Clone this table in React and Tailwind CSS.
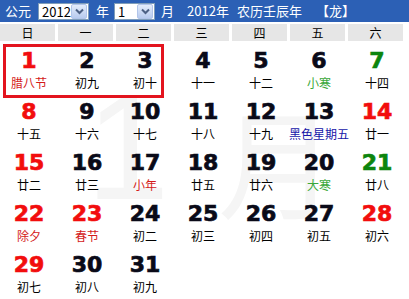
import React from 'react';

const CJK = { fontFamily: '"Noto Sans CJK SC", "Liberation Sans", sans-serif' }
const NUM = { fontFamily: '"DejaVu Sans", "Liberation Sans", sans-serif' }
const SANS = { fontFamily: '"Liberation Sans", sans-serif' }

const weekNames = ["日", "一", "二", "三", "四", "五", "六"]

// n: day, l: lunar text, nc: number colour, lc: lunar colour
const days = [
    { n: 1, l: "腊八节", nc: "red", lc: "red" },
    { n: 2, l: "初九" },
    { n: 3, l: "初十" },
    { n: 4, l: "十一" },
    { n: 5, l: "十二" },
    { n: 6, l: "小寒", lc: "green" },
    { n: 7, l: "十四", nc: "green" },
    { n: 8, l: "十五", nc: "red" },
    { n: 9, l: "十六" },
    { n: 10, l: "十七" },
    { n: 11, l: "十八" },
    { n: 12, l: "十九" },
    { n: 13, l: "黑色星期五", lc: "blue" },
    { n: 14, l: "廿一", nc: "red" },
    { n: 15, l: "廿二", nc: "red" },
    { n: 16, l: "廿三" },
    { n: 17, l: "小年", lc: "red" },
    { n: 18, l: "廿五" },
    { n: 19, l: "廿六" },
    { n: 20, l: "大寒", lc: "green" },
    { n: 21, l: "廿八", nc: "green" },
    { n: 22, l: "除夕", nc: "red", lc: "red" },
    { n: 23, l: "春节", nc: "red", lc: "red" },
    { n: 24, l: "初二" },
    { n: 25, l: "初三" },
    { n: 26, l: "初四" },
    { n: 27, l: "初五" },
    { n: 28, l: "初六", nc: "red" },
    { n: 29, l: "初七", nc: "red" },
    { n: 30, l: "初八" },
    { n: 31, l: "初九" },
]

const numColor = {
    red: "text-[#f20d0d]",
    green: "text-[#0d850d]",
}

const lunarColor = {
    red: "text-[#d41a1a]",
    green: "text-[#3aa83a]",
    blue: "text-[#1616a8]",
}

const FakeSelect = ({ value, width }) => (
    <div className={`flex items-center h-[17px] bg-white border border-[#7f9db9] ${width}`}>
        <span className="flex-1 pl-[3px] text-[13px] leading-none text-black">{value}</span>
        <span className="w-[16px] h-[15px] mr-px flex items-center justify-center rounded-[2px] bg-gradient-to-b from-[#e3ecfb] to-[#b8cbef] border border-[#b2c5ea]">
            <svg width="9" height="7" viewBox="0 0 9 7">
                <path d="M1 1.5 L4.5 5 L8 1.5" fill="none" stroke="#4d6185" strokeWidth="2" />
            </svg>
        </span>
    </div>
)

const DayCell = ({ d }) => (
    <div className="relative flex flex-col items-center h-[51px] pt-[6px]">
        <div className={`text-[22px] leading-[24px] font-bold [-webkit-text-stroke:0.7px_currentColor] ${numColor[d.nc] || "text-[#0a0a18]"}`} style={NUM}>
            {d.n}
        </div>
        <div className={`mt-[3px] text-[12px] leading-[14px] whitespace-nowrap ${lunarColor[d.lc] || "text-black"}`} style={CJK}>
            {d.l}
        </div>
    </div>
)

const App = () => {
    return (
        <div className="w-[409px] h-[299px] bg-white overflow-hidden relative" style={CJK}>
            {/* header bar */}
            <div className="h-[22px] bg-[#2c60b5] flex items-center text-white text-[13px]">
                <span className="ml-[5px] w-[33px]">公元</span>
                <FakeSelect value="2012" width="w-[51px]" />
                <span className="ml-[7px] w-[18px]">年</span>
                <FakeSelect value="1" width="w-[41px]" />
                <span className="ml-[6px]">月</span>
                <span className="ml-[13px]">2012年</span>
                <span className="ml-[8px]">农历壬辰年</span>
                <span className="ml-[14px]">【龙】</span>
            </div>

            {/* weekday row */}
            <div className="mt-[2px] grid grid-cols-[repeat(7,58px)] h-[17px]">
                {weekNames.map((w) => (
                    <div key={w} className="bg-[#e6e6e6] border-r-[3px] border-white text-[12px] leading-[17px] text-black text-center">
                        {w}
                    </div>
                ))}
            </div>

            {/* faint month watermark behind the days */}
            <div aria-hidden="true" className="absolute left-[86px] top-[72px] text-[150px] leading-none text-[#f5f5f5] select-none" style={SANS}>
                1
            </div>
            <div aria-hidden="true" className="absolute left-[218px] top-[100px] text-[118px] leading-none text-[#f5f5f5] select-none">
                月
            </div>

            {/* days */}
            <div className="relative mt-[2px] grid grid-cols-[repeat(7,58px)]">
                {days.map((d) => (
                    <DayCell key={d.n} d={d} />
                ))}
                <div className="absolute left-[3px] top-[1px] w-[161px] h-[54px] border-[3px] border-[#e3141e]" />
            </div>
        </div>
    );
};

export default App;
